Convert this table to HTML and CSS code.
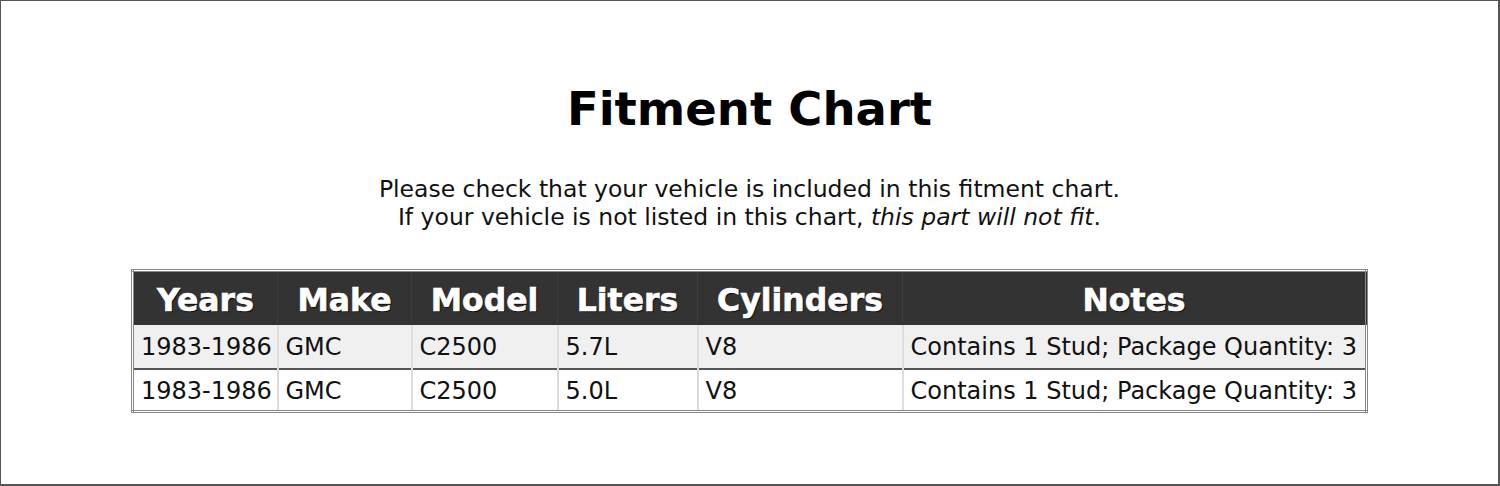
FILE: index.html
```html
<!DOCTYPE html>
<html>
<head>
<meta charset="utf-8">
<link rel="stylesheet" href="styles.css">
</head>
<body>
<div class="frame">
  <h1 class="title">Fitment Chart</h1>
  <p class="intro">Please check that your vehicle is included in this fitment chart.<br>If your vehicle is not listed in this chart, <em>this part will not fit</em>.</p>
  <table class="chart">
    <thead>
      <tr>
        <th class="c-years">Years</th>
        <th class="c-make">Make</th>
        <th class="c-model">Model</th>
        <th class="c-liters">Liters</th>
        <th class="c-cyl">Cylinders</th>
        <th class="c-notes">Notes</th>
      </tr>
    </thead>
    <tbody>
      <tr class="odd">
        <td>1983-1986</td><td>GMC</td><td>C2500</td><td>5.7L</td><td>V8</td><td>Contains 1 Stud; Package Quantity: 3</td>
      </tr>
      <tr class="even">
        <td>1983-1986</td><td>GMC</td><td>C2500</td><td>5.0L</td><td>V8</td><td>Contains 1 Stud; Package Quantity: 3</td>
      </tr>
    </tbody>
  </table>
</div>
</body>
</html>
```
FILE: styles.css
```css
html, body {
  margin: 0;
  padding: 0;
  background: #fff;
}
.frame {
  box-sizing: border-box;
  width: 1500px;
  height: 486px;
  border: 1px solid #555;
  border-bottom: 2px solid #555;
  border-right: 2px solid #555;
  font-family: "DejaVu Sans", Verdana, sans-serif;
  color: #111;
  display: flex;
  flex-direction: column;
  align-items: center;
}
.title {
  margin: 80px 0 0;
  font-size: 46.5px;
  line-height: 56px;
  font-weight: bold;
  color: #000;
}
.intro {
  margin: 38px 0 0;
  font-size: 23.5px;
  line-height: 28px;
  text-align: center;
}
.chart {
  margin-top: 38px;
  border-collapse: collapse;
  border: 3px double #888;
  width: 1234px;
  table-layout: fixed;
}
.chart th {
  box-sizing: border-box;
  background: #333;
  color: #fff;
  font-size: 31.5px;
  font-weight: bold;
  height: 54px;
  padding: 3px 6px 0;
  -webkit-text-stroke: 0.6px #fff;
  text-shadow: 1px 1px 1px #000;
  border-left: 1px solid #3c3c3c;
}
.chart td {
  font-size: 24px;
  padding: 2px 7px 0;
  text-align: left;
  border-left: 2px solid #ddd;
  white-space: nowrap;
  overflow: hidden;
}
.chart tr.odd td {
  background: #f0f0f0;
  height: 41px;
}
.chart tr.even td {
  background: #fff;
  height: 38px;
  border-top: 2px solid #555;
}
.c-years { width: 145px; }
.c-make { width: 134px; }
.c-model { width: 146px; }
.c-liters { width: 140px; }
.c-cyl { width: 205px; }
.c-notes { width: 464px; }
```
